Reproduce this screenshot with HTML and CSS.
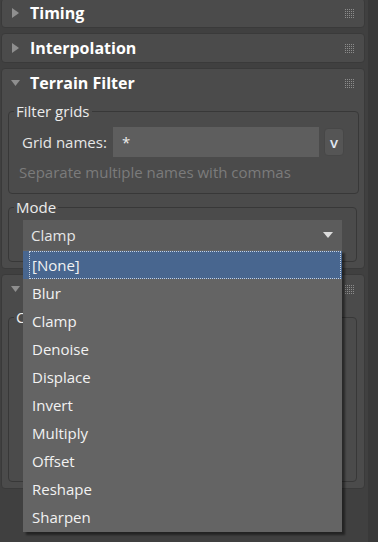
FILE: index.html
```html
<!DOCTYPE html>
<html lang="en">
  <head>
    <meta charset="UTF-8" />
    <meta name="viewport" content="width=device-width, initial-scale=1.0" />
    <title>Terrain Filter</title>
    <link rel="stylesheet" href="styles.css">
  </head>
  <body>
    <div class="app">
      <div class="rollouts">
        <section class="rollout">
          <div class="rollout-head">
            <svg class="arrow" width="10" height="10" viewBox="0 0 10 10"><path d="M1 0 L8 5 L1 10 Z" /></svg>
            <span class="title">Timing</span>
            <svg class="grip" width="9" height="9" viewBox="0 0 9 9"><path d="M0 0h1v1h-1zM2 0h1v1h-1zM4 0h1v1h-1zM6 0h1v1h-1zM8 0h1v1h-1zM0 2h1v1h-1zM2 2h1v1h-1zM4 2h1v1h-1zM6 2h1v1h-1zM8 2h1v1h-1zM0 4h1v1h-1zM2 4h1v1h-1zM4 4h1v1h-1zM6 4h1v1h-1zM8 4h1v1h-1zM0 6h1v1h-1zM2 6h1v1h-1zM4 6h1v1h-1zM6 6h1v1h-1zM8 6h1v1h-1zM0 8h1v1h-1zM2 8h1v1h-1zM4 8h1v1h-1zM6 8h1v1h-1zM8 8h1v1h-1z" /></svg>
          </div>
        </section>

        <section class="rollout">
          <div class="rollout-head">
            <svg class="arrow" width="10" height="10" viewBox="0 0 10 10"><path d="M1 0 L8 5 L1 10 Z" /></svg>
            <span class="title">Interpolation</span>
            <svg class="grip" width="9" height="9" viewBox="0 0 9 9"><path d="M0 0h1v1h-1zM2 0h1v1h-1zM4 0h1v1h-1zM6 0h1v1h-1zM8 0h1v1h-1zM0 2h1v1h-1zM2 2h1v1h-1zM4 2h1v1h-1zM6 2h1v1h-1zM8 2h1v1h-1zM0 4h1v1h-1zM2 4h1v1h-1zM4 4h1v1h-1zM6 4h1v1h-1zM8 4h1v1h-1zM0 6h1v1h-1zM2 6h1v1h-1zM4 6h1v1h-1zM6 6h1v1h-1zM8 6h1v1h-1zM0 8h1v1h-1zM2 8h1v1h-1zM4 8h1v1h-1zM6 8h1v1h-1zM8 8h1v1h-1z" /></svg>
          </div>
        </section>

        <section class="rollout">
          <div class="rollout-head">
            <svg class="arrow" width="10" height="10" viewBox="0 0 10 10"><path d="M0 2 L9 2 L4.5 8 Z" /></svg>
            <span class="title">Terrain Filter</span>
            <svg class="grip" width="9" height="9" viewBox="0 0 9 9"><path d="M0 0h1v1h-1zM2 0h1v1h-1zM4 0h1v1h-1zM6 0h1v1h-1zM8 0h1v1h-1zM0 2h1v1h-1zM2 2h1v1h-1zM4 2h1v1h-1zM6 2h1v1h-1zM8 2h1v1h-1zM0 4h1v1h-1zM2 4h1v1h-1zM4 4h1v1h-1zM6 4h1v1h-1zM8 4h1v1h-1zM0 6h1v1h-1zM2 6h1v1h-1zM4 6h1v1h-1zM6 6h1v1h-1zM8 6h1v1h-1zM0 8h1v1h-1zM2 8h1v1h-1zM4 8h1v1h-1zM6 8h1v1h-1zM8 8h1v1h-1z" /></svg>
          </div>
          <div class="rollout-body">
            <fieldset class="group">
              <legend>Filter grids</legend>
              <div class="field-row">
                <label for="grids">Grid names:</label>
                <input type="text" id="grids" value="*" />
                <button class="pick">v</button>
              </div>
              <p class="hint">Separate multiple names with commas</p>
            </fieldset>

            <fieldset class="group mode">
              <legend>Mode</legend>
              <div class="combo">
                <div class="combo-value">
                  <span>Clamp</span>
                  <svg width="10" height="6" viewBox="0 0 10 6"><path d="M0 0 L10 0 L5 6 Z" /></svg>
                </div>
                <ul class="combo-list">
                  <li class="selected">[None]</li>
                  <li>Blur</li>
                  <li>Clamp</li>
                  <li>Denoise</li>
                  <li>Displace</li>
                  <li>Invert</li>
                  <li>Multiply</li>
                  <li>Offset</li>
                  <li>Reshape</li>
                  <li>Sharpen</li>
                </ul>
              </div>
            </fieldset>
          </div>
        </section>

        <section class="rollout">
          <div class="rollout-head">
            <svg class="arrow" width="10" height="10" viewBox="0 0 10 10"><path d="M0 2 L9 2 L4.5 8 Z" /></svg>
            <span class="title">Clamp</span>
            <svg class="grip" width="9" height="9" viewBox="0 0 9 9"><path d="M0 0h1v1h-1zM2 0h1v1h-1zM4 0h1v1h-1zM6 0h1v1h-1zM8 0h1v1h-1zM0 2h1v1h-1zM2 2h1v1h-1zM4 2h1v1h-1zM6 2h1v1h-1zM8 2h1v1h-1zM0 4h1v1h-1zM2 4h1v1h-1zM4 4h1v1h-1zM6 4h1v1h-1zM8 4h1v1h-1zM0 6h1v1h-1zM2 6h1v1h-1zM4 6h1v1h-1zM6 6h1v1h-1zM8 6h1v1h-1zM0 8h1v1h-1zM2 8h1v1h-1zM4 8h1v1h-1zM6 8h1v1h-1zM8 8h1v1h-1z" /></svg>
          </div>
          <div class="rollout-body">
            <fieldset class="group tall">
              <legend>Clamp range</legend>
              <div class="spacer"></div>
            </fieldset>
          </div>
        </section>
      </div>
      <div class="gutter"></div>
      <div class="scroll-track"></div>
    </div>
  </body>
</html>
```

FILE: styles.css
```css
*,
*::before,
*::after {
  margin: 0;
  padding: 0;
  box-sizing: border-box;
}

body {
  font-family: "Open Sans", "Noto Sans", sans-serif;
  font-size: 14px;
  color: #e6e6e6;
  background-color: #404040;
  height: 542px;
  overflow: hidden;
}

.app {
  display: flex;
  height: 542px;
}

.rollouts {
  width: 364px;
  margin-left: 1px;
  margin-top: -2px;
  display: flex;
  flex-direction: column;
  gap: 5px;
}

.gutter {
  width: 3px;
}

.scroll-track {
  width: 10px;
  background-color: #393939;
}

.rollout {
  background-color: #4b4b4b;
  border: 1px solid #3a3a3a;
  border-radius: 4px;
}

.rollout-head {
  height: 28px;
  display: flex;
  align-items: center;
  padding: 0 10px 0 9px;
}

.arrow {
  fill: #8f8f8f;
  margin-right: 9px;
  flex: none;
}

.title {
  flex: 1;
  font-size: 16px;
  font-weight: 700;
  color: #ffffff;
}

.grip {
  fill: #8c8c8c;
}

.rollout-body {
  padding: 4px 7px 6px 6px;
}

.group {
  border: 1px solid #383838;
  border-radius: 4px;
  padding: 6px 14px 11px 5px;
}

.group + .group {
  margin-top: 3px;
}

.group legend {
  padding: 0 2px;
  font-size: 15px;
  line-height: 20px;
  color: #ececec;
}

.field-row {
  display: flex;
  align-items: center;
  margin-left: 8px;
}

.field-row label {
  width: 91px;
  font-size: 15px;
}

.field-row input {
  flex: 1;
  height: 30px;
  border: none;
  background-color: #5e5e5e;
  color: #ececec;
  font-family: inherit;
  font-size: 15px;
  padding-left: 9px;
  outline: none;
}

.pick {
  width: 20px;
  height: 28px;
  margin-left: 5px;
  border: 1px solid #474747;
  border-radius: 4px;
  background-color: #555555;
  color: #e0e6f0;
  font-family: inherit;
  font-size: 15px;
  font-weight: 600;
}

.hint {
  margin: 5px 0 0 5px;
  line-height: 20px;
  font-size: 15px;
  color: #7b7b7b;
}

.mode {
  padding: 3px 14px 11px 5px;
}

.combo {
  position: relative;
  margin-left: 9px;
}

.combo-value {
  height: 30px;
  display: flex;
  align-items: center;
  justify-content: space-between;
  padding: 0 9px 0 8px;
  background-color: #5c5c5c;
  font-size: 15px;
}

.combo-value svg {
  fill: #dcdcdc;
}

.combo-list {
  position: absolute;
  top: 30px;
  left: 0;
  right: 0;
  list-style: none;
  padding: 1px 0;
  background-color: #646464;
  box-shadow: 3px 3px 2px rgba(0, 0, 0, 0.45);
  z-index: 2;
}

.combo-list li {
  position: relative;
  height: 28px;
  line-height: 29px;
  padding-left: 9px;
  font-size: 15px;
  color: #f2f2f2;
}

.combo-list .selected {
  background-color: #48668f;
}

.combo-list .selected::after {
  content: "";
  position: absolute;
  top: 0;
  bottom: 0;
  left: 6px;
  right: 1px;
  border: 1px dotted #c6d2e2;
}

.tall {
  padding-bottom: 0;
}

.spacer {
  height: 148px;
}
```
